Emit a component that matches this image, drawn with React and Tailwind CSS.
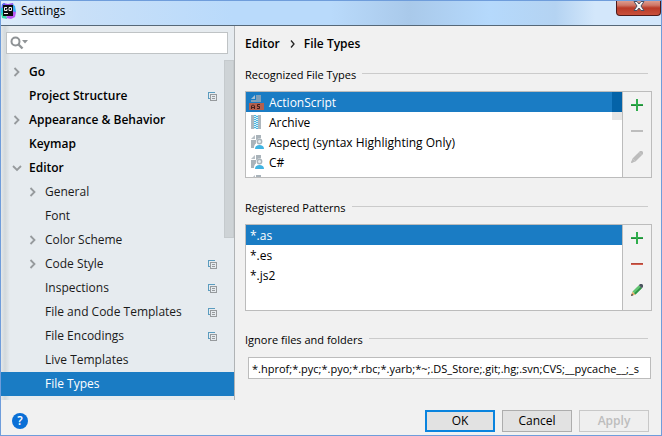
import React from "react";

const tree = [
  { label: "Go", top: true, arrow: "right" },
  { label: "Project Structure", top: true, copy: true },
  { label: "Appearance & Behavior", top: true, arrow: "right" },
  { label: "Keymap", top: true },
  { label: "Editor", top: true, arrow: "down" },
  { label: "General", arrow: "right" },
  { label: "Font" },
  { label: "Color Scheme", arrow: "right" },
  { label: "Code Style", arrow: "right", copy: true },
  { label: "Inspections", copy: true },
  { label: "File and Code Templates", copy: true },
  { label: "File Encodings", copy: true },
  { label: "Live Templates" },
  { label: "File Types", selected: true },
];

function AppIcon() {
  return (
    <svg width="15" height="16" viewBox="0 0 15 16" className="shrink-0">
      <path d="M2 0 L7 1 L12 0 L13 4 L2 4 Z" fill="#9a4bea" />
      <path d="M1 1 L4 0 L4 6 L0 7 Z" fill="#5a6cf0" />
      <path d="M0 5 L4 5 L4 11 L0 12 Z" fill="#22c3de" />
      <path d="M11 1 L14 3 L15 9 L11 10 Z" fill="#35aaf5" />
      <path d="M0 10 L5 10 L6 16 L1 15 Z" fill="#35dba8" />
      <path d="M10 8 L15 9 L14 14 L10 16 L5 15 Z" fill="#b95af5" />
      <rect x="2" y="2" width="10" height="11" fill="#0b0b0d" />
      <path d="M6 4.5 H3.5 V7.5 H6 V6 H5.5 M8 4.5 H10.5 V7.5 H8 Z" fill="none" stroke="#f2f2f2" />
      <rect x="3" y="10" width="4" height="1" fill="#f2f2f2" />
    </svg>
  );
}

function CloseIcon() {
  return (
    <svg width="12" height="10" viewBox="0 0 12 10">
      <path d="M1 0.5 H4 L6 3 L8 0.5 H11 L8 5 L11 9.5 H8 L6 7 L4 9.5 H1 L4 5 Z" fill="#f4f4f4" stroke="#4a4f63" />
    </svg>
  );
}

function SearchIcon() {
  return (
    <svg width="19" height="14" viewBox="0 0 19 14" className="shrink-0">
      <circle cx="5.5" cy="5.5" r="4" fill="none" stroke="#8f9396" strokeWidth="2" />
      <path d="M8.5 8.5 L12.5 12.5" stroke="#8f9396" strokeWidth="2.4" />
      <path d="M12 4 H18 L15 7.5 Z" fill="#8f9396" />
    </svg>
  );
}

function Chevron({ dir }) {
  return (
    <svg width="12" height="12" viewBox="0 0 12 12" className="shrink-0">
      {dir === "right" && <path d="M3.5 2 L7.5 6 L3.5 10" fill="none" stroke="#969a9d" strokeWidth="1.8" />}
      {dir === "down" && <path d="M2 4 L6 8 L10 4" fill="none" stroke="#969a9d" strokeWidth="1.8" />}
    </svg>
  );
}

function CopyIcon() {
  return (
    <svg width="9" height="9" viewBox="0 0 9 9" className="shrink-0" shapeRendering="crispEdges">
      <path d="M0 0 H7 V1 H1 V6 H2 V7 H0 Z" fill="#5b9cbf" />
      <path d="M2 2 H9 V9 H2 Z M3 3 V8 H8 V3 Z" fill="#969a9d" fillRule="evenodd" />
      <path d="M4 4 H7 V5 H4 Z M4 6 H7 V7 H4 Z" fill="#969a9d" />
    </svg>
  );
}

function FileIcon({ kind }) {
  if (kind === "as") {
    return (
      <svg width="16" height="16" viewBox="0 0 16 16" className="shrink-0">
        <path d="M6 1 V5 H2 Z" fill="#a9c1d3" />
        <path d="M7 1 H12 V8 H2 V6 H7 Z" fill="#7f9fb8" />
        <rect x="0" y="9" width="15" height="7" fill="#b5604d" />
        <path
          d="M2.5 15 V12 L3.5 11 H4.5 L5.5 12 V15 M2.5 13.5 H5.5 M11 10.5 H8.5 V12.5 H10.5 V14.5 H8"
          fill="none"
          stroke="#43201c"
        />
      </svg>
    );
  }
  if (kind === "zip") {
    return (
      <svg width="16" height="16" viewBox="0 0 16 16" className="shrink-0" shapeRendering="crispEdges">
        <path d="M2 1 H5 V15 H2 Z M9 1 H12 V15 H9 Z" fill="#adb7be" />
        <path d="M5 1 H9 V15 H5 Z" fill="#d5f0fa" />
        <path
          d="M5 1h2v1h-2z M7 2h2v1h-2z M5 3h2v1h-2z M7 4h2v1h-2z M5 5h2v1h-2z M7 6h2v1h-2z M5 7h2v1h-2z M7 8h2v1h-2z M5 9h2v1h-2z M7 10h2v1h-2z M5 11h2v1h-2z M7 12h2v1h-2z M5 13h2v1h-2z M7 14h2v1h-2z"
          fill="#4bb5e0"
        />
      </svg>
    );
  }
  return (
    <svg width="16" height="16" viewBox="0 0 16 16" className="shrink-0">
      <path d="M6 1 V5 H2 Z" fill="#b8c0c6" />
      <path d="M7 1 H12 V4.2 C8 4 6.5 6 7 9.5 C5.5 10.5 5 12 5 14 H2 V6 H7 Z" fill="#a9b3ba" />
      <circle cx="10.5" cy="7.5" r="2.2" fill="#e8edf0" stroke="#a9b3ba" strokeWidth="1.4" />
      <path d="M6 15 C6 12 8 11 10.5 11 C13 11 15 12 15 15 Z" fill="#41b4e2" />
    </svg>
  );
}

function PlusIcon() {
  return (
    <svg width="12" height="12" viewBox="0 0 12 12" shapeRendering="crispEdges">
      <path d="M5 0 H7 V5 H12 V7 H7 V12 H5 V7 H0 V5 H5 Z" fill="#2fae4c" />
      <path d="M0 6 H5 V7 H0 Z M7 6 H12 V7 H7 Z" fill="#238a3a" />
    </svg>
  );
}

function MinusIcon({ off }) {
  return (
    <svg width="12" height="12" viewBox="0 0 12 12" shapeRendering="crispEdges">
      <rect x="0" y="5" width="12" height="2" fill={off ? "#bdbdbd" : "#d5604f"} />
      {!off && <rect x="0" y="5" width="12" height="1" fill="#b4483b" />}
    </svg>
  );
}

function PencilIcon({ off }) {
  return (
    <svg width="12" height="12" viewBox="0 0 12 12">
      <path d="M0 12 L1.5 7.5 L4.5 10.5 Z" fill={off ? "#bcbcbc" : "#e9b06c"} />
      <path d="M0 12 L0.8 9.6 L2.4 11.2 Z" fill={off ? "#bcbcbc" : "#3c3f4a"} />
      <path d="M1.5 7.5 L7.8 1.2 L10.8 4.2 L4.5 10.5 Z" fill={off ? "#bcbcbc" : "#62c472"} />
      {!off && <path d="M3.2 9.2 L9.5 2.9 L10.8 4.2 L4.5 10.5 Z" fill="#2f9546" />}
      <path d="M7.8 1.2 L9 0 H11 L12 1 V3 L10.8 4.2 Z" fill={off ? "#bcbcbc" : "#4c5560"} />
    </svg>
  );
}

function GroupTitle({ children, id }) {
  return (
    <div className="flex h-4 items-center gap-1.5">
      <span id={id} className="whitespace-nowrap text-[11px] leading-4">
        {children}
      </span>
      <span className="mr-1 mb-1 h-px flex-1 bg-[#cbcbcb]" />
    </div>
  );
}

function ListPanel({ labelledBy, children, disabled }) {
  return (
    <div className="flex h-[87px] border border-[#bcbcbc]">
      <ul aria-labelledby={labelledBy} className="relative min-w-0 flex-1 overflow-hidden bg-white">
        {children}
      </ul>
      <div className="flex w-[29px] flex-col items-center border-l border-[#bcbcbc] bg-[#f2f2f2]">
        <button aria-label="Add" className="flex h-[26px] w-full items-center justify-center">
          <PlusIcon />
        </button>
        <button aria-label="Remove" disabled={disabled} className="flex h-[26px] w-full items-center justify-center">
          <MinusIcon off={disabled} />
        </button>
        <button aria-label="Edit" disabled={disabled} className="flex h-[26px] w-full items-center justify-center">
          <PencilIcon off={disabled} />
        </button>
      </div>
    </div>
  );
}

function FileRow({ kind, children, selected }) {
  return (
    <li className={"flex h-5 items-center gap-1 pl-[3px] " + (selected ? "bg-[#1a7cc4] text-white" : "")}>
      <FileIcon kind={kind} />
      <span className="pt-0.5">{children}</span>
    </li>
  );
}

function PatternRow({ children, selected }) {
  return (
    <li className={"flex h-5 items-center pt-0.5 pl-1 " + (selected ? "bg-[#1a7cc4] text-white" : "")}>{children}</li>
  );
}

export default function App() {
  return (
    <div className="flex min-h-screen flex-col border border-[#6f9ddb] bg-[#f1f1f1] font-['Open_Sans','Noto_Sans',sans-serif] text-xs text-black">
      <header className="flex h-[25px] items-start border-b border-[#566878] bg-[linear-gradient(90deg,#dcebfa_0%,#c9e0f8_12%,#b9dafb_35%,#b9dafb_50%,#a9c9ea_62%,#b5d9fc_74%,#b4d3f2_84%,#d3e7fb_90%,#d3e7fb_100%)]">
        <div className="flex flex-1 items-center gap-[5px] pt-0.5">
          <AppIcon />
          <h1 className="text-xs leading-4">Settings</h1>
        </div>
        <button
          aria-label="Close"
          className="flex h-[15px] w-[45px] items-center justify-center rounded-b border border-t-0 border-[#4d1a1a] bg-[linear-gradient(180deg,#dc9c8e_0%,#cf7767_30%,#b93a27_50%,#c8503c_100%)] pb-1"
        >
          <CloseIcon />
        </button>
      </header>

      <div className="flex flex-1">
        <nav className="w-[234px] shrink-0 border-r border-[#b0b3b5] bg-[linear-gradient(90deg,#e4e8ea_0px,#d3d9dc_4px,#e6ebef_9px)] pt-1.5">
          <div className="mr-1.5 ml-[5px] flex h-[22px] items-center border border-[#bfc3c5] bg-white pl-[3px]">
            <SearchIcon />
            <input aria-label="Search settings" className="min-w-0 flex-1 bg-transparent outline-none" />
          </div>
          <div className="relative mt-1.5">
            <ul>
              {tree.map((n) => (
                <li
                  key={n.label}
                  className={
                    "flex h-6 items-center gap-1.5 pr-[17px] " +
                    (n.top ? "pl-2.5 font-semibold " : "pl-[26px] ") +
                    (n.selected ? "bg-[#1a7cc4] text-white" : n.top ? "text-black" : "text-[#1a1a1a]")
                  }
                >
                  <Chevron dir={n.arrow} />
                  <span className="flex-1 whitespace-nowrap">{n.label}</span>
                  {n.copy && <CopyIcon />}
                </li>
              ))}
            </ul>
            <div className="absolute top-0 right-0 h-[178px] w-2.5 border border-[#c5cacd] bg-[#ced3d6]" />
          </div>
        </nav>

        <main className="flex min-w-0 flex-1 flex-col pr-[9px] pl-2.5 pt-2.5">
          <h2 className="flex h-4 items-center font-semibold">
            <span>Editor</span>
            <svg width="24" height="10" viewBox="0 0 24 10">
              <path d="M11 1.5 L14 5 L11 8.5" fill="none" stroke="#222" strokeWidth="1.3" />
            </svg>
            <span>File Types</span>
          </h2>

          <div className="mt-[15px] mb-2">
            <GroupTitle id="types">Recognized File Types</GroupTitle>
          </div>
          <ListPanel labelledBy="types" disabled>
            <FileRow kind="as" selected>
              ActionScript
            </FileRow>
            <FileRow kind="zip">Archive</FileRow>
            <FileRow kind="user">AspectJ (syntax Highlighting Only)</FileRow>
            <FileRow kind="user">C#</FileRow>
            <FileRow kind="user" />
            <li aria-hidden="true" className="absolute top-0 right-0 w-2.5">
              <div className="h-5 bg-[#0463a8]" />
              <div className="h-2 bg-[#e6e6e6]" />
            </li>
          </ListPanel>

          <div className="mt-[22px] mb-2">
            <GroupTitle id="patterns">Registered Patterns</GroupTitle>
          </div>
          <ListPanel labelledBy="patterns">
            <PatternRow selected>*.as</PatternRow>
            <PatternRow>*.es</PatternRow>
            <PatternRow>*.js2</PatternRow>
          </ListPanel>

          <div className="mt-[21px] mb-[9px]">
            <GroupTitle id="ignore">Ignore files and folders</GroupTitle>
          </div>
          <input
            aria-labelledby="ignore"
            defaultValue="*.hprof;*.pyc;*.pyo;*.rbc;*.yarb;*~;.DS_Store;.git;.hg;.svn;CVS;__pycache__;_s"
            className="mr-px ml-[3px] h-[22px] border border-[#bcbcbc] bg-white px-[3px] text-[11px] outline-none"
          />
        </main>
      </div>

      <footer className="flex h-[35px] items-center pr-3 pl-[11px]">
        <button
          aria-label="Help"
          className="mt-1.5 flex size-4 items-center justify-center rounded-full bg-[#0a6fd6] font-semibold text-white"
        >
          ?
        </button>
        <div className="mt-1.5 ml-auto flex gap-[7px]">
          <button className="h-[22px] w-[70px] border-2 border-[#0a84de] bg-[#e2e2e2]">OK</button>
          <button className="h-[22px] w-[70px] border border-[#adadad] bg-[#e2e2e2]">Cancel</button>
          <button disabled className="h-[22px] w-[70px] border border-[#c8c8c8] bg-[#efefef] font-semibold text-[#bdbdbd]">
            Apply
          </button>
        </div>
      </footer>
    </div>
  );
}
